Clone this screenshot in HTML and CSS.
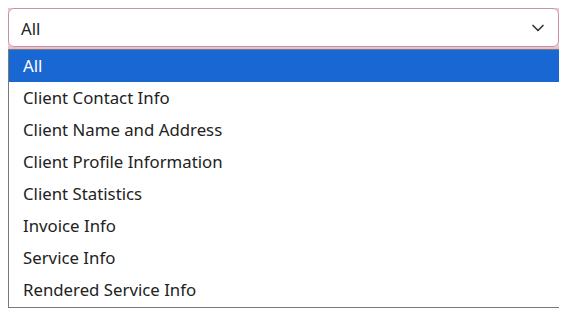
FILE: index.html
```html
<!DOCTYPE html>
<html lang="en">
<head>
    <meta charset="UTF-8">
    <meta name="viewport" content="width=device-width, initial-scale=1.0">
    <title>Report Filter</title>
    <link rel="stylesheet" href="styles.css">
</head>
<body>
    <div class="select-box">
        <span class="select-value">All</span>
        <svg class="chevron" width="16" height="12" viewBox="0 2 16 12">
            <path d="M3 5.5l5 5 5-5" fill="none" stroke="#343a40" stroke-width="1.7" stroke-linecap="round" stroke-linejoin="round"/>
        </svg>
    </div>

    <ul class="options">
        <li class="selected">All</li>
        <li>Client Contact Info</li>
        <li>Client Name and Address</li>
        <li>Client Profile Information</li>
        <li>Client Statistics</li>
        <li>Invoice Info</li>
        <li>Service Info</li>
        <li>Rendered Service Info</li>
    </ul>
</body>
</html>
```

FILE: styles.css
```css
body {
    font-family: "Noto Sans", "Open Sans", Arial, sans-serif;
    background-color: #fff;
    margin: 8px;
    color: #212529;
}

.select-box {
    display: flex;
    align-items: center;
    justify-content: space-between;
    box-sizing: border-box;
    height: 39px;
    padding: 1px 12px 0 12px;
    border: 1px solid #c98fa3;
    border-radius: 6px;
    box-shadow: 0 0 0 4px #e9c3d0;
    font-size: 16.8px;
}

.chevron {
    display: block;
}

.options {
    position: relative;
    z-index: 1;
    list-style: none;
    margin: 2px 0 0 0;
    padding: 0 0 1px 0;
    width: 553px;
    box-sizing: border-box;
    background-color: #fff;
    border: 1px solid #7a7a7a;
    box-shadow: 2px 2px 3px rgba(0, 0, 0, 0.3);
}

.options li {
    height: 32px;
    line-height: 32px;
    padding-left: 14px;
    font-size: 16.8px;
    color: #222;
}

.options li.selected {
    background-color: #1967d2;
    color: #fff;
}
```
